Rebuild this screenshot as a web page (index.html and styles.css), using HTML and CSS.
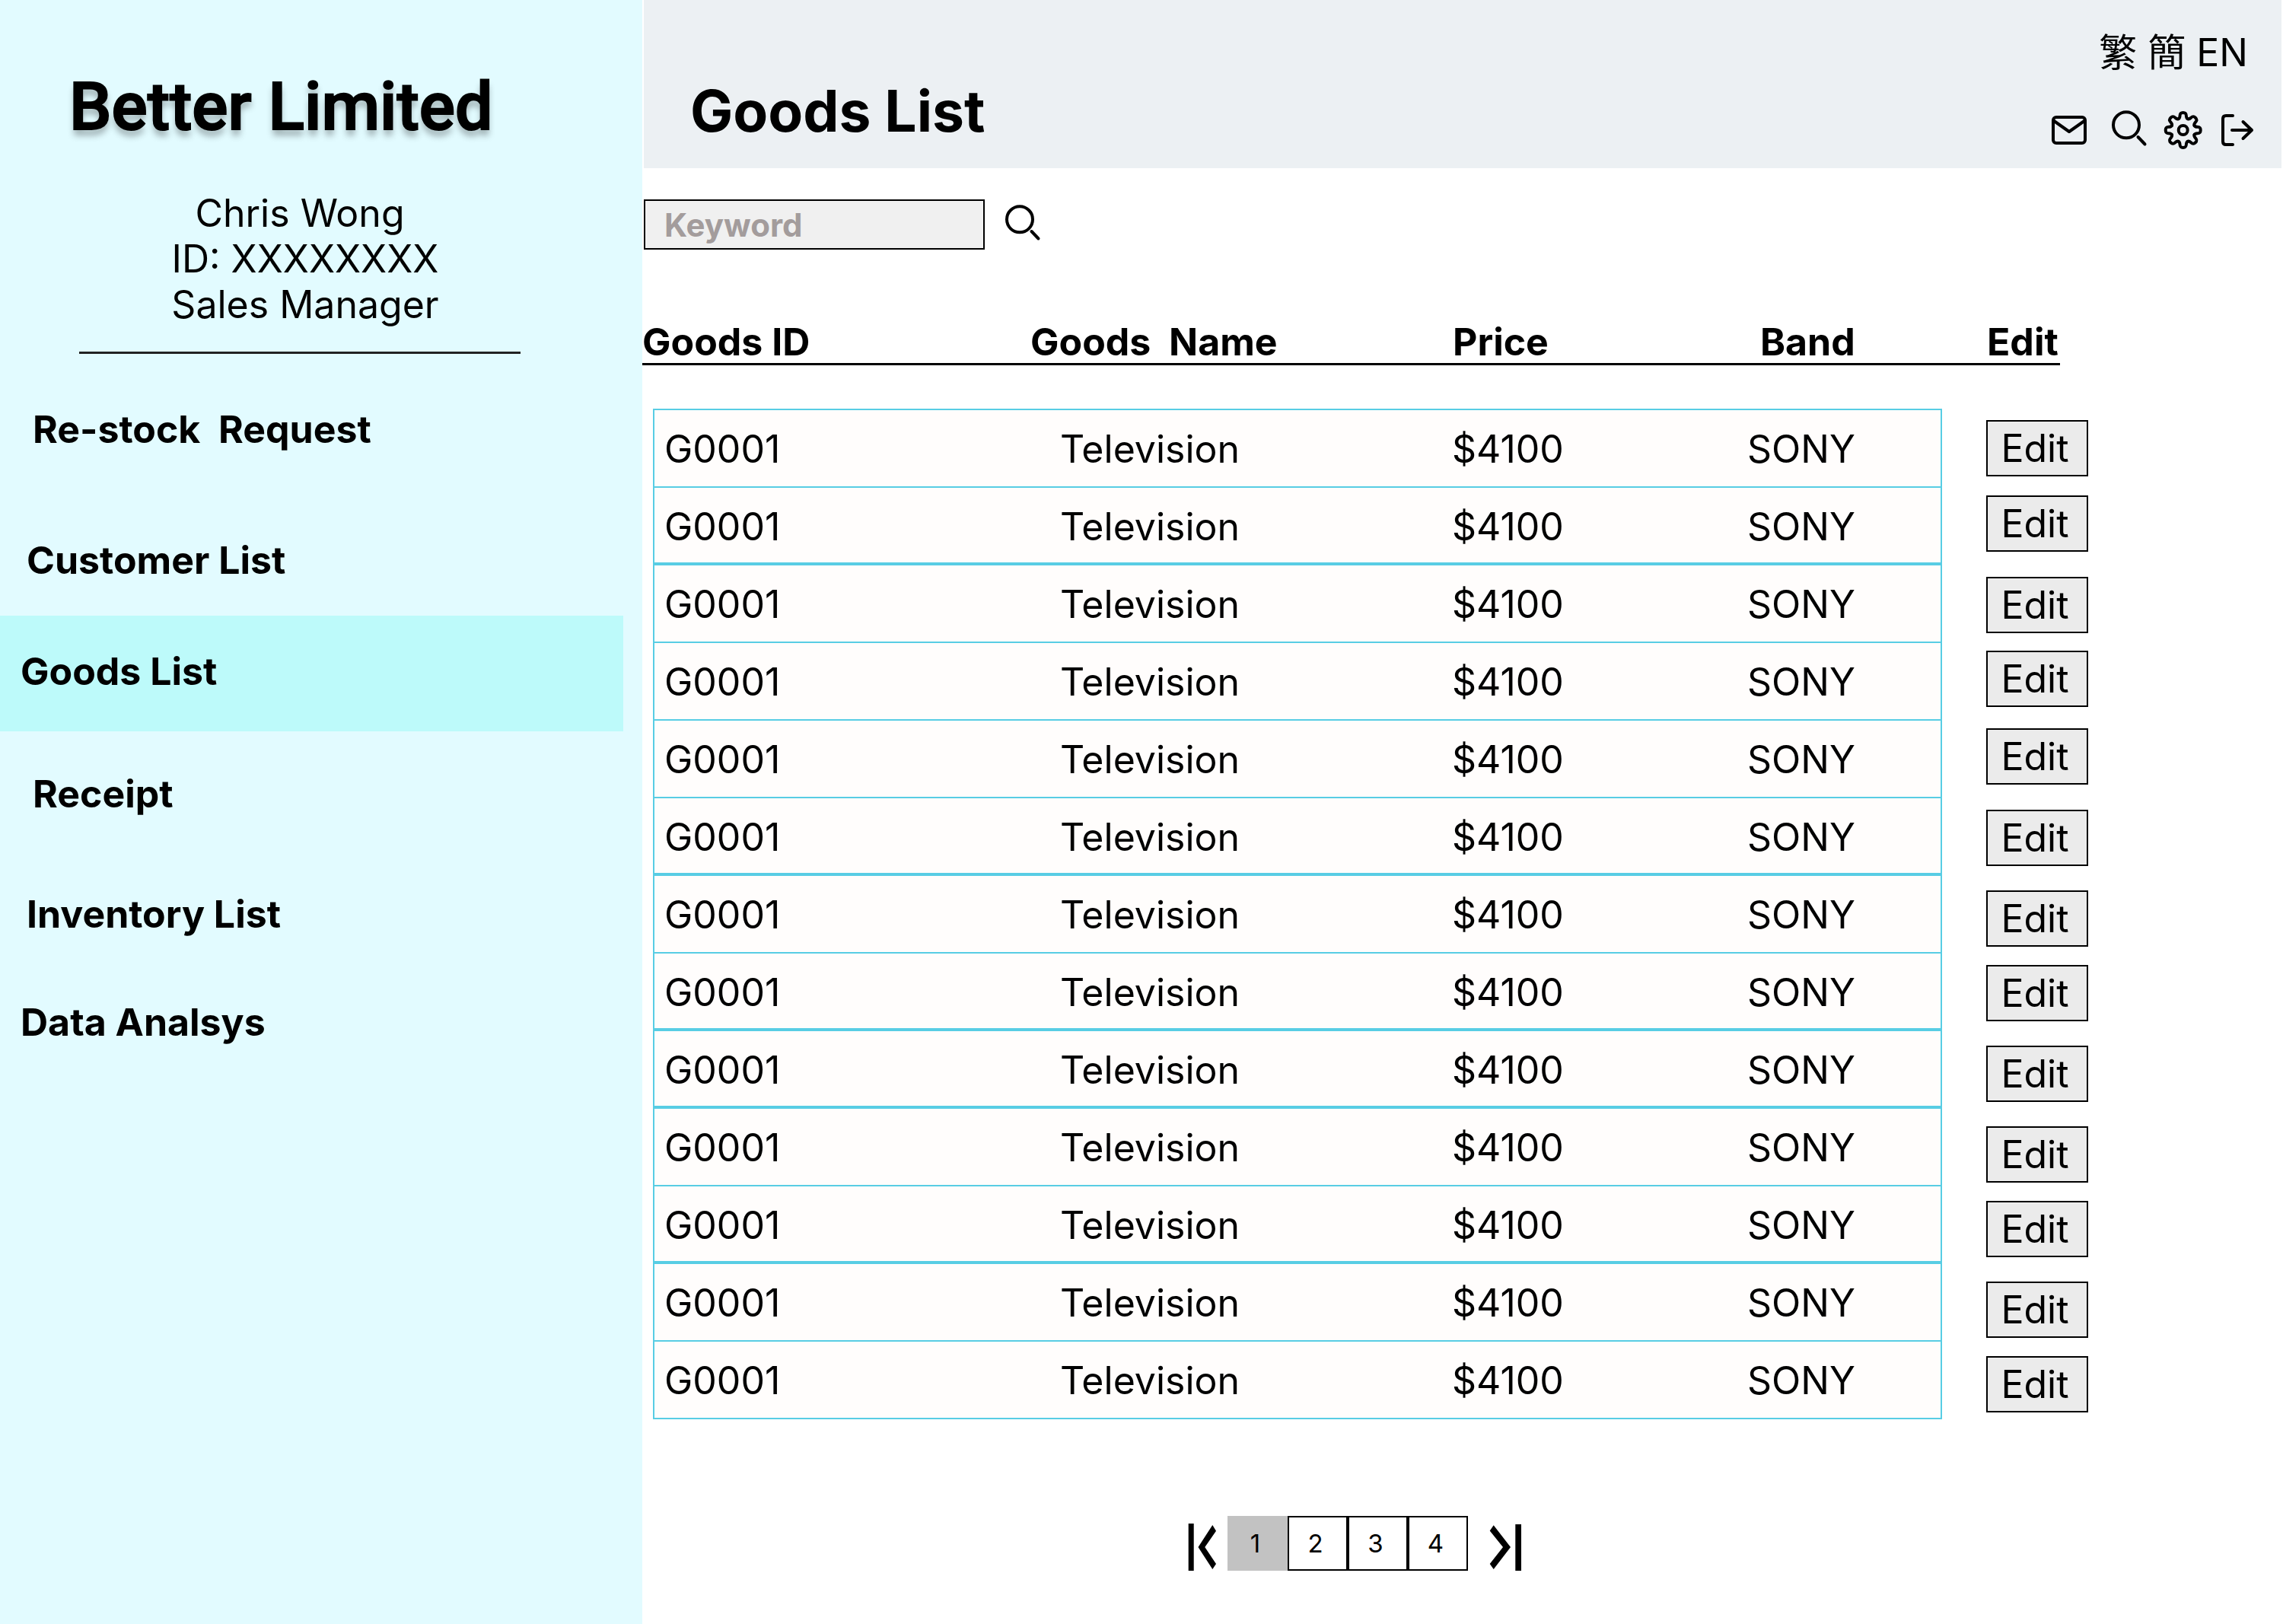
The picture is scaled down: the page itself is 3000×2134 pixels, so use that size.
FILE: index.html
```html
<!DOCTYPE html>
<html lang="en">
<head>
<meta charset="utf-8">
<title>Goods List - Better Limited</title>
<link rel="stylesheet" href="styles.css">
</head>
<body>
<svg class="sprite" aria-hidden="true">
  <symbol id="icon-mail" viewBox="0 0 50 50">
    <rect x="4" y="8" width="42" height="34" rx="4"/>
    <path d="M4.500 12.500 25 27 45.500 12.500"/>
  </symbol>
  <symbol id="icon-search" viewBox="0 0 50 50">
    <circle cx="26" cy="18.300" r="17"/>
    <path d="M41.500 34 50.500 43.500"/>
  </symbol>
  <symbol id="icon-gear" viewBox="0 0 50 50">
    <defs>
      <path id="tooth" d="M-6.120-14.780C-2-16.500-7-23 0-23S2-16.500 6.120-14.780"/>
    </defs>
    <g transform="translate(26.700 25)">
      <circle r="6"/>
      <use href="#tooth"/>
      <use href="#tooth" transform="rotate(45)"/>
      <use href="#tooth" transform="rotate(90)"/>
      <use href="#tooth" transform="rotate(135)"/>
      <use href="#tooth" transform="rotate(180)"/>
      <use href="#tooth" transform="rotate(225)"/>
      <use href="#tooth" transform="rotate(270)"/>
      <use href="#tooth" transform="rotate(315)"/>
    </g>
  </symbol>
  <symbol id="icon-logout" viewBox="0 0 50 50">
    <path d="M18 6H9Q5 6 5 10V40Q5 44 9 44H18M17 25H43M31.500 14 43 25 31.500 36"/>
  </symbol>
</svg>
<div class="layout">
  <aside class="sidebar">
    <div class="brand">Better Limited</div>
    <div class="profile">
      <p>Chris Wong&nbsp;</p>
      <p>ID: XXXXXXXX</p>
      <p>Sales Manager</p>
    </div>
    <hr class="divider">
    <nav class="menu">
      <a class="menu-item deep" href="#restock">Re-stock  Request</a>
      <a class="menu-item mid" href="#customers">Customer List</a>
      <a class="menu-item active" href="#goods" aria-current="page">Goods List</a>
      <a class="menu-item deep" href="#receipt">Receipt</a>
      <a class="menu-item mid" href="#inventory">Inventory List</a>
      <a class="menu-item" href="#analysis">Data Analsys</a>
    </nav>
  </aside>
  <main class="main">
    <header class="topbar">
      <h1 class="title">Goods List</h1>
      <div class="tools">
        <div class="languages"><a href="#zh-hant" lang="zh-Hant">繁</a> <a href="#zh-hans" lang="zh-Hant">簡</a> <a href="#en">EN</a></div>
        <div class="actions">
          <button class="icon-button" aria-label="Mail"><svg class="icon"><use href="#icon-mail"/></svg></button>
          <button class="icon-button" aria-label="Search"><svg class="icon"><use href="#icon-search"/></svg></button>
          <button class="icon-button" aria-label="Settings"><svg class="icon"><use href="#icon-gear"/></svg></button>
          <button class="icon-button" aria-label="Log out"><svg class="icon"><use href="#icon-logout"/></svg></button>
        </div>
      </div>
    </header>
    <form class="search">
      <input class="keyword" type="text" placeholder="Keyword" aria-label="Keyword">
      <button class="icon-button" type="button" aria-label="Search goods"><svg class="icon"><use href="#icon-search"/></svg></button>
    </form>
    <table class="goods">
      <thead>
        <tr><th>Goods ID</th><th>Goods  Name</th><th>Price</th><th>Band</th><th>Edit</th></tr>
      </thead>
      <tbody>
        <tr><td>G0001</td><td>Television</td><td>$4100</td><td>SONY</td><td class="edit"><button>Edit</button></td></tr>
        <tr class="heavy"><td>G0001</td><td>Television</td><td>$4100</td><td>SONY</td><td class="edit high"><button>Edit</button></td></tr>
        <tr><td>G0001</td><td>Television</td><td>$4100</td><td>SONY</td><td class="edit"><button>Edit</button></td></tr>
        <tr><td>G0001</td><td>Television</td><td>$4100</td><td>SONY</td><td class="edit high"><button>Edit</button></td></tr>
        <tr><td>G0001</td><td>Television</td><td>$4100</td><td>SONY</td><td class="edit high"><button>Edit</button></td></tr>
        <tr class="heavy"><td>G0001</td><td>Television</td><td>$4100</td><td>SONY</td><td class="edit"><button>Edit</button></td></tr>
        <tr><td>G0001</td><td>Television</td><td>$4100</td><td>SONY</td><td class="edit low"><button>Edit</button></td></tr>
        <tr class="heavy"><td>G0001</td><td>Television</td><td>$4100</td><td>SONY</td><td class="edit"><button>Edit</button></td></tr>
        <tr class="heavy"><td>G0001</td><td>Television</td><td>$4100</td><td>SONY</td><td class="edit low"><button>Edit</button></td></tr>
        <tr><td>G0001</td><td>Television</td><td>$4100</td><td>SONY</td><td class="edit lowest"><button>Edit</button></td></tr>
        <tr class="heavy"><td>G0001</td><td>Television</td><td>$4100</td><td>SONY</td><td class="edit low"><button>Edit</button></td></tr>
        <tr><td>G0001</td><td>Television</td><td>$4100</td><td>SONY</td><td class="edit lowest"><button>Edit</button></td></tr>
        <tr><td>G0001</td><td>Television</td><td>$4100</td><td>SONY</td><td class="edit low"><button>Edit</button></td></tr>
      </tbody>
    </table>
    <nav class="pagination" aria-label="Pages">
      <button class="page-end" aria-label="First page">
        <svg width="38" height="62" viewBox="0 0 38 62"><path d="M.700 0H7.700V62H.700ZM32.300 2 37 9.700 22.300 31 37 53 32.300 60 13.500 31Z"/></svg>
      </button>
      <div class="pages">
        <button class="page current" aria-current="page">1</button>
        <button class="page">2</button>
        <button class="page">3</button>
        <button class="page">4</button>
      </div>
      <button class="page-end last" aria-label="Last page">
        <svg width="42" height="62" viewBox="0 0 42 62"><path d="M34.300 1H42V62H34.300ZM5.700 2.300 28 31 5.700 60 .700 53 18 31 .700 9.500Z"/></svg>
      </button>
    </nav>
  </main>
</div>
</body>
</html>
```
FILE: styles.css
```css
* {
  box-sizing: border-box;
}

body {
  margin: 0;
  background: #fff;
  color: #000;
  font-family: Inter, "Noto Sans CJK TC", sans-serif;
  font-size: 50px;
  line-height: 60px;
}

a {
  color: inherit;
  text-decoration: none;
}

button,
input {
  padding: 0;
  border: 0;
  border-radius: 0;
  background: none;
  color: inherit;
  font: inherit;
}

button {
  cursor: pointer;
}

.sprite {
  position: absolute;
  width: 0;
  height: 0;
}

.layout {
  display: grid;
  grid-template-columns: 844px minmax(0, 1fr);
  min-height: 100vh;
}

/* Sidebar */
.sidebar {
  background: #e2fbff;
}

.brand {
  padding: 85px 0 0 91px;
  font-family: Roboto, sans-serif;
  font-size: 88px;
  font-weight: 500;
  line-height: 110px;
  -webkit-text-stroke: 2px #000;
  text-shadow: 0 8px 8px rgba(0, 0, 0, 0.3);
}

.profile {
  padding: 55px 42px 0 0;
  text-align: center;
}

.profile p {
  margin: 0;
}

.divider {
  width: 580px;
  height: 3px;
  margin: 32px 0 0 104px;
  border: 0;
  background: #222;
}

.menu {
  display: grid;
  grid-template-rows: 198px 146px 152px 164px 152px 132px;
  padding-right: 25px;
}

.menu-item {
  display: flex;
  align-items: center;
  padding-left: 27px;
  font-weight: 700;
  white-space: pre;
}

.menu-item.mid {
  padding-left: 35px;
}

.menu-item.deep {
  padding-left: 43px;
}

.menu-item.active {
  padding-bottom: 6px;
  background: #bdfafa;
}

/* Top bar */
.topbar {
  display: flex;
  justify-content: space-between;
  height: 221px;
  margin: 0 2px;
  padding: 0 32px 0 61px;
  background: #ecf0f3;
}

.title {
  margin: 0;
  padding-top: 101px;
  font-size: 75px;
  font-weight: 700;
  line-height: 90px;
}

.tools {
  display: flex;
  flex-direction: column;
  align-items: flex-end;
  padding-top: 39px;
}

.languages {
  padding-right: 12px;
}

.actions {
  display: flex;
  gap: 24px;
  padding-top: 47px;
}

.icon-button {
  width: 50px;
  height: 50px;
}

.icon {
  display: block;
  width: 50px;
  height: 50px;
  overflow: visible;
  fill: none;
  stroke: #000;
  stroke-width: 4px;
  stroke-linecap: round;
  stroke-linejoin: round;
}

.sprite symbol {
  overflow: visible;
}

/* Search */
.search {
  display: flex;
  align-items: center;
  gap: 20px;
  padding: 41px 2px 0;
}

.keyword {
  width: 448px;
  height: 66px;
  padding-left: 25px;
  border: 2px solid #000;
  background: #f0f0f0;
  font-size: 42px;
  font-weight: 700;
}

.keyword::placeholder {
  color: #a39c9c;
  opacity: 1;
}

/* Goods table */
.goods {
  display: block;
  margin: 93px 256px 0 0;
}

.goods thead,
.goods tbody {
  display: block;
}

.goods tr {
  display: grid;
}

.goods thead tr {
  grid-template-columns: 510fr 555fr 404fr 298fr 96fr;
  margin-right: 37px;
  border-bottom: 3px solid #000;
}

.goods th {
  padding: 0;
  font-weight: 700;
  line-height: 56px;
  text-align: left;
  white-space: pre;
}

.goods tbody {
  margin: 57px 0 0 14px;
}

.goods tbody tr {
  grid-template-columns: 535fr 515fr 388fr 256fr 192fr;
  height: 102px;
}

.goods td {
  padding: 21px 0 0;
  border-bottom: 2px solid #58cde4;
  background: #fffdfc;
}

.goods td:first-child {
  padding-left: 13px;
  border-left: 2px solid #58cde4;
}

.goods td:nth-child(4) {
  border-right: 2px solid #58cde4;
}

.goods .heavy td {
  border-bottom-width: 4px;
}

.goods tbody tr:first-child {
  height: 104px;
}

.goods tbody tr:first-child td {
  border-top: 2px solid #58cde4;
}

.goods tbody tr td.edit {
  height: 73px;
  padding: 0;
  margin-top: 15px;
  border: 0;
  background: none;
  text-align: right;
}

.goods tbody tr td.edit.high {
  margin-top: 10px;
}

.goods tbody tr td.edit.low {
  margin-top: 19px;
}

.goods tbody tr td.edit.lowest {
  margin-top: 23px;
}

.edit button {
  width: 134px;
  height: 74px;
  padding-right: 6px;
  border: 2px solid #000;
  background: #ebebeb;
}

/* Pagination */
.pagination {
  display: flex;
  align-items: flex-end;
  justify-content: center;
  padding: 127px 284px 70px 0;
}

.page-end svg {
  display: block;
}

.page-end {
  margin-right: 14px;
}

.page-end.last {
  margin: 0 0 0 28px;
}

.pages {
  display: flex;
}

.page {
  width: 79px;
  height: 72px;
  padding-right: 6px;
  border: 2px solid #000;
  font-size: 33px;
  line-height: 40px;
}

.page.current {
  border-color: #c2c2c2;
  background: #c2c2c2;
}
```
